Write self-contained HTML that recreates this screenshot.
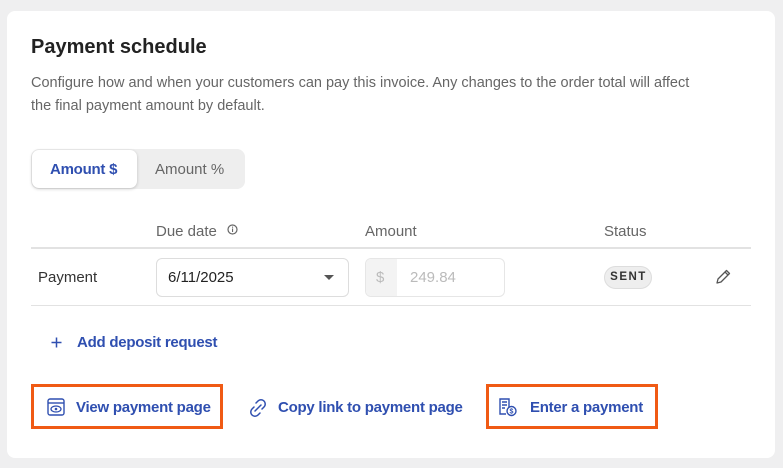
<!DOCTYPE html>
<html><head><style>
*{box-sizing:border-box;margin:0;padding:0}
body{width:783px;height:468px;background:#efeff0;font-family:"Liberation Sans",sans-serif;position:relative;overflow:hidden}
.card{position:absolute;left:7px;top:11px;width:768px;height:447px;background:#fff;border-radius:8px}
.a{position:absolute;white-space:nowrap}
.blue{color:#2f4fb0;font-weight:bold;font-size:15px;letter-spacing:-0.25px}
.hdr{color:#666;font-size:15px}
.box{position:absolute;border:3px solid #f05a14}
</style></head><body>
<div class="card"></div>
<div class="a" style="left:31px;top:36px;font-size:20px;font-weight:bold;color:#222">Payment schedule</div>
<div class="a" style="left:31px;top:72px;font-size:14.5px;color:#666;line-height:23px">Configure how and when your customers can pay this invoice. Any changes to the order total will affect<br>the final payment amount by default.</div>
<div class="a" style="left:31px;top:149px;width:214px;height:40px;background:#eee;border-radius:8px"></div>
<div class="a" style="left:32px;top:150px;width:105px;height:38px;background:#fff;border-radius:7px;box-shadow:0 1px 3px rgba(0,0,0,.2)"></div>
<div class="a blue" style="left:50px;top:161px">Amount $</div>
<div class="a hdr" style="left:155px;top:161px">Amount %</div>
<div class="a hdr" style="left:156px;top:223px">Due date</div>
<svg class="a" style="left:227px;top:224px" width="11" height="11" viewBox="0 0 11 11"><circle cx="5.5" cy="5.5" r="4.5" fill="none" stroke="#666" stroke-width="1.2"/><rect x="5" y="4.5" width="1.1" height="3.5" fill="#666"/><rect x="5" y="2.6" width="1.1" height="1.1" fill="#666"/></svg>
<div class="a hdr" style="left:365px;top:223px">Amount</div>
<div class="a hdr" style="left:604px;top:223px">Status</div>
<div class="a" style="left:31px;top:247px;width:720px;height:2px;background:#e2e2e2"></div>
<div class="a" style="left:38px;top:269px;font-size:15px;color:#333">Payment</div>
<div class="a" style="left:156px;top:258px;width:193px;height:39px;border:1px solid #ddd;border-radius:6px"></div>
<div class="a" style="left:168px;top:269px;font-size:15px;color:#222">6/11/2025</div>
<div class="a" style="left:324px;top:275px;border-left:5px solid transparent;border-right:5px solid transparent;border-top:5px solid #555"></div>
<div class="a" style="left:365px;top:258px;width:140px;height:39px;border:1px solid #e6e6e6;border-radius:6px;overflow:hidden"><div style="width:31px;height:100%;background:#f3f3f3"></div></div>
<div class="a" style="left:376px;top:269px;font-size:15px;color:#bbb">$</div>
<div class="a" style="left:410px;top:269px;font-size:15px;color:#bbb">249.84</div>
<div class="a" style="left:604px;top:266px;width:48px;height:23px;border-radius:12px;background:#eee;border:1px solid #ddd;font-size:11.5px;font-weight:bold;letter-spacing:1.5px;color:#333;text-align:center;line-height:21px;padding-left:1px">SENT</div>
<svg class="a" style="left:714px;top:268px" width="18" height="18" viewBox="0 0 18 18"><path d="M3 15l1-4L12.5 2.5l3 3L7 14z M11 4l3 3" fill="none" stroke="#555" stroke-width="1.3" stroke-linejoin="round"/></svg>
<div class="a" style="left:31px;top:305px;width:720px;height:1px;background:#e2e2e2"></div>
<svg class="a" style="left:51px;top:337px" width="11" height="11" viewBox="0 0 11 11"><path d="M5.5 0.5v10M0.5 5.5h10" stroke="#2f4fb0" stroke-width="1.5"/></svg>
<div class="a blue" style="left:77px;top:334px">Add deposit request</div>
<div class="box" style="left:31px;top:384px;width:192px;height:45px"></div>
<svg class="a" style="left:46px;top:397px" width="20" height="20" viewBox="0 0 20 20"><rect x="2" y="2" width="16" height="16" rx="2" fill="none" stroke="#2f4fb0" stroke-width="1.4"/><line x1="2" y1="6" x2="18" y2="6" stroke="#2f4fb0" stroke-width="1.4"/><ellipse cx="10" cy="12" rx="5" ry="3" fill="none" stroke="#2f4fb0" stroke-width="1.3"/><circle cx="10" cy="12" r="1.3" fill="#2f4fb0"/></svg>
<div class="a blue" style="left:76px;top:399px">View payment page</div>
<svg class="a" style="left:247px;top:397px" width="22" height="22" viewBox="0 0 22 22"><path d="M9 6l2-2a4 4 0 016 6l-2 2M13 16l-2 2a4 4 0 01-6-6l2-2M8 14l6-6" fill="none" stroke="#2f4fb0" stroke-width="1.5" stroke-linecap="round"/></svg>
<div class="a blue" style="left:278px;top:399px">Copy link to payment page</div>
<div class="box" style="left:486px;top:384px;width:172px;height:45px"></div>
<svg class="a" style="left:497px;top:396px" width="22" height="22" viewBox="0 0 22 22"><path d="M12 11V3H3v15h6M5 6h5M5 9h5M5 12h3" fill="none" stroke="#2f4fb0" stroke-width="1.4"/><circle cx="14.5" cy="15" r="4.5" fill="none" stroke="#2f4fb0" stroke-width="1.4"/><text x="14.5" y="17.5" font-size="7" font-family="Liberation Sans" fill="#2f4fb0" text-anchor="middle" font-weight="bold">$</text></svg>
<div class="a blue" style="left:530px;top:399px">Enter a payment</div>
</body></html>
